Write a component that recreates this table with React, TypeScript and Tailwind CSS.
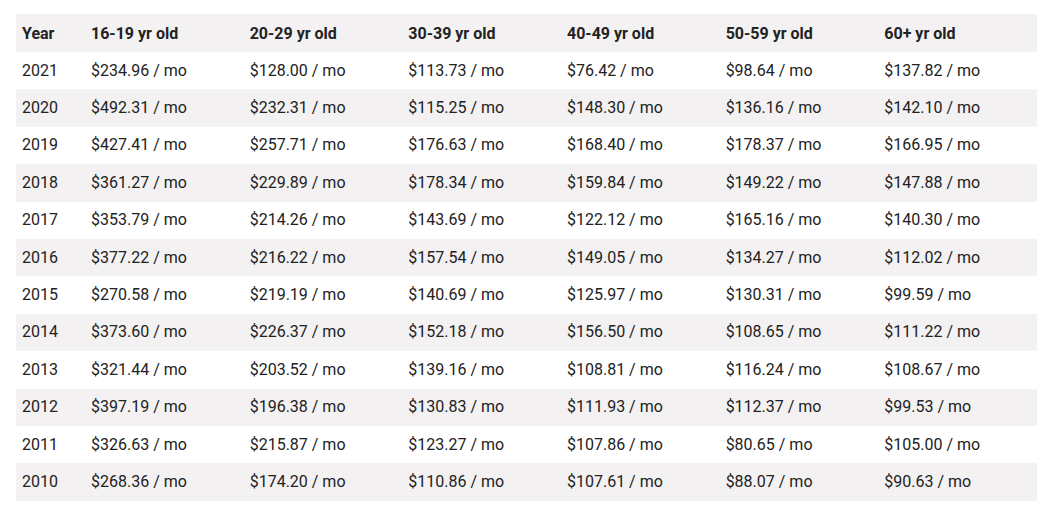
const headers = ["Year", "16-19 yr old", "20-29 yr old", "30-39 yr old", "40-49 yr old", "50-59 yr old", "60+ yr old"];

const rows: string[][] = [
  ["2021", "234.96", "128.00", "113.73", "76.42", "98.64", "137.82"],
  ["2020", "492.31", "232.31", "115.25", "148.30", "136.16", "142.10"],
  ["2019", "427.41", "257.71", "176.63", "168.40", "178.37", "166.95"],
  ["2018", "361.27", "229.89", "178.34", "159.84", "149.22", "147.88"],
  ["2017", "353.79", "214.26", "143.69", "122.12", "165.16", "140.30"],
  ["2016", "377.22", "216.22", "157.54", "149.05", "134.27", "112.02"],
  ["2015", "270.58", "219.19", "140.69", "125.97", "130.31", "99.59"],
  ["2014", "373.60", "226.37", "152.18", "156.50", "108.65", "111.22"],
  ["2013", "321.44", "203.52", "139.16", "108.81", "116.24", "108.67"],
  ["2012", "397.19", "196.38", "130.83", "111.93", "112.37", "99.53"],
  ["2011", "326.63", "215.87", "123.27", "107.86", "80.65", "105.00"],
  ["2010", "268.36", "174.20", "110.86", "107.61", "88.07", "90.63"],
];

export default function App() {
  return (
    <div className="bg-white px-4 pt-[14px] font-['Roboto',sans-serif] text-[16px] text-[#222222]">
      <table className="w-[1021px] table-fixed border-collapse">
        <colgroup>
          <col className="w-[69px]" />
          <col />
          <col />
          <col />
          <col />
          <col />
          <col />
        </colgroup>
        <thead>
          <tr className="h-[38px] bg-[#f3f1f2]">
            {headers.map((h) => (
              <th key={h} className="px-[6px] pt-[2px] text-left font-bold">
                {h}
              </th>
            ))}
          </tr>
        </thead>
        <tbody>
          {rows.map((row, i) => (
            <tr key={row[0]} className={i % 2 === 1 ? "h-[37.4px] bg-[#f3f1f2]" : "h-[37.4px] bg-white"}>
              {row.map((cell, j) => (
                <td key={j} className="px-[6px] text-left font-normal">
                  {j === 0 ? cell : `$${cell} / mo`}
                </td>
              ))}
            </tr>
          ))}
        </tbody>
      </table>
    </div>
  );
}
